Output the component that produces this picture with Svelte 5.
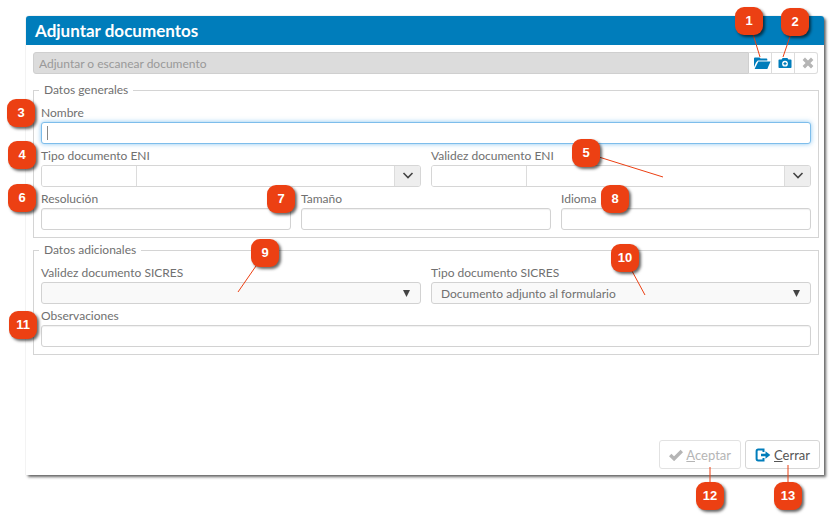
<script lang="ts">
  type Callout = {
    n: number;
    x: number;
    y: number;
    to?: [number, number];
  };

  // x values are laid out on a sheet 835 units wide and scale with it
  const SHEET = 835;

  const callouts: Callout[] = [
    { n: 1, x: 749, y: 21, to: [760, 57] },
    { n: 2, x: 795, y: 22, to: [783, 57] },
    { n: 3, x: 21, y: 113 },
    { n: 4, x: 22, y: 155 },
    { n: 5, x: 586, y: 153, to: [663, 177] },
    { n: 6, x: 22, y: 198 },
    { n: 7, x: 281, y: 199 },
    { n: 8, x: 615, y: 199 },
    { n: 9, x: 265, y: 253, to: [238, 292] },
    { n: 10, x: 625, y: 258, to: [645, 295] },
    { n: 11, x: 23, y: 325 },
    { n: 12, x: 710, y: 496, to: [710, 467] },
    { n: 13, x: 788, y: 496, to: [788, 465] },
  ];

  const pct = (x: number) => `${(x / SHEET) * 100}%`;

  let nombre = $state('');
  let tipoSicres = $state('formulario');
</script>

{#snippet combo(id: string, label: string)}
  <div class="field">
    <label for={id}>{label}</label>
    <div class="combo">
      <input {id} class="combo__code" type="text" />
      <input class="combo__text" type="text" aria-label={`${label}, descripción`} />
      <button type="button" class="combo__toggle" aria-label={`Desplegar ${label}`}>
        <svg viewBox="0 0 12 8" width="12" height="8" aria-hidden="true">
          <path d="M1.5 1 6 5.500 10.500 1" fill="none" stroke="currentColor" stroke-width="1.6" />
        </svg>
      </button>
    </div>
  </div>
{/snippet}

{#snippet text(id: string, label: string)}
  <div class="field">
    <label for={id}>{label}</label>
    <input {id} class="box" type="text" />
  </div>
{/snippet}

<div class="sheet">
  <section class="dialog" role="dialog" aria-labelledby="dialog-title">
    <h1 id="dialog-title">Adjuntar documentos</h1>

    <form class="dialog__body" onsubmit={(e) => e.preventDefault()}>
      <div class="attach">
        <input type="text" placeholder="Adjuntar o escanear documento" aria-label="Documento" disabled />
        <button type="button" aria-label="Adjuntar">
          <svg viewBox="0 0 18 14" width="18" height="14" aria-hidden="true">
            <path d="M1 11V2.5Q1 1.500 2 1.500h4.500Q7 1.500 7.500 2.500h6q.8 0 .8.8v1.200H4.800L3 6.500z" />
            <path d="M5.300 5.500h12.200L14.300 13H1.600z" />
          </svg>
        </button>
        <button type="button" aria-label="Escanear">
          <svg viewBox="0 0 14 12" width="14" height="12" aria-hidden="true">
            <path
              fill-rule="evenodd"
              d="M1.3 2.5h2.3L4.6 1h4.800l1 1.5h2.3q.8 0 .8.8v6.9q0 .8-.8.8H1.300q-.8 0-.8-.8V3.300q0-.8.8-.8zM7 3.800a2.900 2.900 0 1 0 0 5.800 2.900 2.900 0 0 0 0-5.800z"
            />
            <path d="M6.400 5.100h1.200v1h1v1.200h-1v1H6.400v-1h-1V6.100h1z" />
          </svg>
        </button>
        <button type="button" aria-label="Quitar" disabled>
          <svg viewBox="0 0 12 12" width="12" height="12" aria-hidden="true">
            <path d="m1.800 1.800 8.400 8.400M10.200 1.800l-8.400 8.400" fill="none" stroke="currentColor" stroke-width="3.4" />
          </svg>
        </button>
      </div>

      <fieldset class="general">
        <legend>Datos generales</legend>
        <div class="rows">
          <div class="field">
            <label for="nombre">Nombre</label>
            <div class="focused">
              <input id="nombre" class="box" type="text" bind:value={nombre} />
              {#if !nombre}
                <span class="caret" aria-hidden="true"></span>
              {/if}
            </div>
          </div>
          <div class="row row--2">
            {@render combo('tipo-eni', 'Tipo documento ENI')}
            {@render combo('validez-eni', 'Validez documento ENI')}
          </div>
          <div class="row row--3">
            {@render text('resolucion', 'Resolución')}
            {@render text('tamano', 'Tamaño')}
            {@render text('idioma', 'Idioma')}
          </div>
        </div>
      </fieldset>

      <fieldset class="extra">
        <legend>Datos adicionales</legend>
        <div class="rows">
          <div class="row row--2">
            <div class="field">
              <label for="validez-sicres">Validez documento SICRES</label>
              <div class="select">
                <select id="validez-sicres">
                  <option value=""></option>
                </select>
                <svg class="select__arrow" viewBox="0 0 7 7" width="7" height="7" aria-hidden="true">
                  <path d="M0 0h7L3.5 7z" />
                </svg>
              </div>
            </div>
            <div class="field">
              <label for="tipo-sicres">Tipo documento SICRES</label>
              <div class="select">
                <select id="tipo-sicres" bind:value={tipoSicres}>
                  <option value="formulario">Documento adjunto al formulario</option>
                </select>
                <svg class="select__arrow" viewBox="0 0 7 7" width="7" height="7" aria-hidden="true">
                  <path d="M0 0h7L3.5 7z" />
                </svg>
              </div>
            </div>
          </div>
          {@render text('observaciones', 'Observaciones')}
        </div>
      </fieldset>

      <footer class="actions">
        <button type="submit" disabled>
          <svg viewBox="0 0 14 12" width="14" height="12" aria-hidden="true">
            <path d="m1.200 6 3.900 3.800L12.800 2" fill="none" stroke="currentColor" stroke-width="3.4" />
          </svg>
          <span><u>A</u>ceptar</span>
        </button>
        <button type="button" class="close">
          <svg viewBox="0 0 16 14" width="16" height="14" aria-hidden="true">
            <path
              d="M8.500 4V1.600H3.200Q1.600 1.600 1.600 3.200v7.600q0 1.600 1.600 1.600h5.300V10"
              fill="none"
              stroke="currentColor"
              stroke-width="2"
            />
            <path d="M6 5.800h4.500V3.200L15.300 7l-4.800 3.800V8.200H6z" />
          </svg>
          <span><u>C</u>errar</span>
        </button>
      </footer>
    </form>
  </section>

  <div class="callouts">
    <svg class="callouts__lines" aria-hidden="true">
      {#each callouts as c (c.n)}
        {#if c.to}
          <line x1={pct(c.x)} y1={c.y} x2={pct(c.to[0])} y2={c.to[1]} />
        {/if}
      {/each}
    </svg>
    {#each callouts as c (c.n)}
      <span class="callout" style:left={pct(c.x)} style:top={`${c.y}px`}>{c.n}</span>
    {/each}
  </div>
</div>

<style>
  :global(body) {
    margin: 0;
    background: #fff;
  }

  .sheet {
    position: relative;
    box-sizing: border-box;
    display: flex;
    min-height: 100vh;
    padding: 16px 11px 46px 26px;
    font-family: Lato, 'Liberation Sans', sans-serif;
    font-size: 12px;
    color: #707070;
  }

  .sheet * {
    box-sizing: border-box;
  }

  input,
  select,
  button {
    margin: 0;
    font: inherit;
    color: inherit;
    border-radius: 0;
    outline: none;
  }

  .dialog {
    display: flex;
    flex: 1;
    flex-direction: column;
    min-width: 0;
    background: #fff;
    border-radius: 3px 3px 0 0;
    box-shadow:
      0 0 1px rgba(0, 0, 0, 0.3),
      2px 2px 3px rgba(0, 0, 0, 0.6);
  }

  h1 {
    margin: 0;
    padding: 0 9px;
    border-radius: 3px 3px 0 0;
    background: #007dbb;
    color: #fff;
    font-size: 17px;
    font-weight: 700;
    line-height: 29px;
  }

  .dialog__body {
    display: flex;
    flex: 1;
    flex-direction: column;
    padding: 7px 5px 6px 7px;
  }

  .attach {
    display: flex;
    height: 22px;
    margin-right: 1px;
  }

  .attach input {
    flex: 1;
    min-width: 0;
    padding: 0 5px;
    border: 1px solid #cfcfcf;
    border-radius: 3px 0 0 3px;
    background: #dcdcdc;
  }

  .attach input::placeholder {
    color: #999;
    opacity: 1;
  }

  .attach button {
    display: flex;
    align-items: center;
    justify-content: center;
    width: 23px;
    padding: 0 0 0 3px;
    border: 1px solid #dcdcdc;
    border-left: 0;
    background: #fff;
    color: #007dbb;
  }

  .attach button:last-child {
    border-radius: 0 3px 3px 0;
  }

  .attach button:disabled {
    color: #b5b5b5;
  }

  svg {
    flex: none;
    fill: currentColor;
  }

  fieldset {
    min-width: 0;
    margin: 0;
    padding: 6px 7px 7px;
    border: 1px solid #d4d4d4;
  }

  .general {
    margin-top: 8px;
  }

  .extra {
    margin-top: 4px;
  }

  legend {
    margin-left: -2px;
    padding: 0 5px;
    line-height: 16px;
  }

  .rows {
    display: flex;
    flex-direction: column;
    gap: 3px;
  }

  .row {
    display: grid;
    gap: 10px;
  }

  .row--2 {
    grid-template-columns: repeat(2, minmax(0, 1fr));
  }

  .row--3 {
    grid-template-columns: repeat(3, minmax(0, 1fr));
  }

  .field label {
    display: block;
    line-height: 18px;
  }

  .box {
    display: block;
    width: 100%;
    height: 22px;
    padding: 0 6px;
    border: 1px solid #d2d2d2;
    border-radius: 3px;
    background: #fff;
    box-shadow: inset 0 1px 1px rgba(0, 0, 0, 0.06);
  }

  .focused {
    position: relative;
  }

  .focused .box {
    border-color: #7dbdeb;
    box-shadow: 0 0 5px rgba(90, 175, 235, 0.7);
  }

  .caret {
    position: absolute;
    top: 4px;
    left: 6px;
    width: 1px;
    height: 14px;
    background: #888;
  }

  .combo {
    display: flex;
    height: 22px;
    border: 1px solid #d6d6d6;
    border-radius: 3px;
    overflow: hidden;
  }

  .combo input {
    min-width: 0;
    padding: 0 6px;
    border: 0;
    background: #fff;
  }

  .combo .combo__code {
    width: 25%;
    border-right: 1px solid #dcdcdc;
  }

  .combo__text {
    flex: 1;
  }

  .combo__toggle {
    display: flex;
    align-items: center;
    justify-content: center;
    width: 26px;
    padding: 0;
    border: 0;
    border-left: 1px solid #dcdcdc;
    background: #eee;
    color: #444;
  }

  .select {
    position: relative;
  }

  select {
    display: block;
    width: 100%;
    height: 22px;
    padding: 0 24px 0 9px;
    border: 1px solid #d2d2d2;
    border-radius: 3px;
    background: #f9f9f9;
    appearance: none;
  }

  .select__arrow {
    position: absolute;
    top: 8px;
    right: 11px;
    color: #444;
    pointer-events: none;
  }

  .actions {
    display: flex;
    justify-content: flex-end;
    gap: 4px;
    margin-top: auto;
    margin-right: -1px;
  }

  .actions button {
    display: flex;
    align-items: center;
    gap: 3px;
    height: 29px;
    padding: 0 9px;
    border: 1px solid #d6d6d6;
    border-radius: 3px;
    background: #fff;
    color: #555;
    font-size: 13px;
  }

  .actions button:disabled {
    border-color: #e2e2e2;
    color: #b5b5b5;
  }

  .actions .close svg {
    color: #007dbb;
  }

  .callouts {
    position: absolute;
    inset: 0;
    pointer-events: none;
  }

  .callouts__lines {
    width: 100%;
    height: 100%;
  }

  .callouts__lines line {
    stroke: #ec4013;
    stroke-width: 1;
  }

  .callout {
    position: absolute;
    width: 28px;
    height: 28px;
    border-radius: 9px;
    background: #ec4013;
    box-shadow: 2px 2px 3px rgba(0, 0, 0, 0.6);
    color: #fff;
    font-family: 'Liberation Sans', sans-serif;
    font-size: 13px;
    font-weight: 700;
    line-height: 28px;
    text-align: center;
    transform: translate(-50%, -50%);
  }
</style>
